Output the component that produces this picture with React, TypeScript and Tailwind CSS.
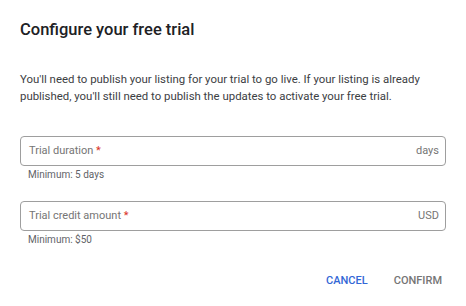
export default function App() {
  return (
    <div className="w-[466px] h-[306px] bg-white px-5 pt-[18px] font-['Roboto',sans-serif] text-[#202124]">
      <h2 className="text-[16.5px] leading-6 font-medium">Configure your free trial</h2>
      <p className="mt-[29px] text-[11.4px] leading-[17px] text-[#3c4043]">
        You'll need to publish your listing for your trial to go live. If your listing is already published, you'll still need to publish the updates to activate your free trial.
      </p>

      <div className="mt-[31px]">
        <div className="flex h-[30px] items-center justify-between rounded border border-[#9e9e9e] pl-2 pr-[6px] text-[11px]">
          <span className="text-[#757575]">
            Trial duration <span className="text-[#d93025]">*</span>
          </span>
          <span className="text-[#757575]">days</span>
        </div>
        <div className="mt-[3px] pl-2 text-[10px] leading-[12px] text-[#5f6368]">Minimum: 5 days</div>
      </div>

      <div className="mt-[20px]">
        <div className="flex h-[30px] items-center justify-between rounded border border-[#9e9e9e] pl-2 pr-[6px] text-[11px]">
          <span className="text-[#757575]">
            Trial credit amount <span className="text-[#d93025]">*</span>
          </span>
          <span className="text-[#757575]">USD</span>
        </div>
        <div className="mt-[3px] pl-2 text-[10px] leading-[12px] text-[#5f6368]">Minimum: $50</div>
      </div>

      <div className="mt-[27px] flex justify-end gap-[26px] pr-1 text-[11px] font-medium">
        <button className="text-[#3367d6]">CANCEL</button>
        <button className="text-[#757575]">CONFIRM</button>
      </div>
    </div>
  )
}
